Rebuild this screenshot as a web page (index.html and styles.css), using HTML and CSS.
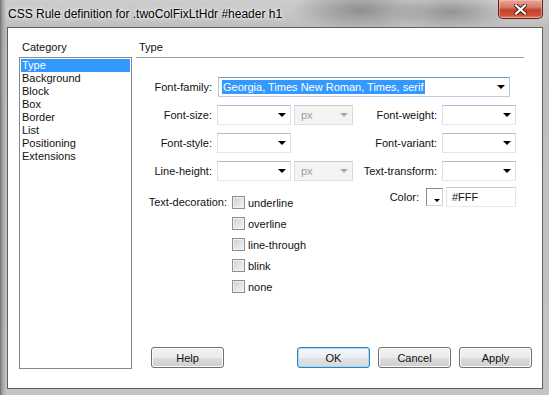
FILE: index.html
```html
<!DOCTYPE html>
<html lang="en">
<head>
    <meta charset="UTF-8">
    <meta name="viewport" content="width=device-width, initial-scale=1.0">
    <title>CSS Rule definition</title>
    <link rel="stylesheet" href="styles.css">
</head>
<body>
    <div class="window">
        <div class="titlebar">
            <span class="title">CSS Rule definition for .twoColFixLtHdr #header h1</span>
            <button class="close" title="Close">
                <svg width="13" height="11" viewBox="0 0 13 11">
                    <path d="M2 1.5 L11 9.5 M11 1.5 L2 9.5" stroke="#4a2219" stroke-width="4.2" stroke-linecap="square"/>
                    <path d="M2 1.5 L11 9.5 M11 1.5 L2 9.5" stroke="#ffffff" stroke-width="2.2" stroke-linecap="square"/>
                </svg>
            </button>
        </div>
        <div class="client">
            <div class="sidebar">
                <div class="caption">Category</div>
                <ul class="category-list">
                    <li class="selected">Type</li>
                    <li>Background</li>
                    <li>Block</li>
                    <li>Box</li>
                    <li>Border</li>
                    <li>List</li>
                    <li>Positioning</li>
                    <li>Extensions</li>
                </ul>
            </div>
            <div class="main">
                <div class="panel-title">Type</div>

                <!-- Font rows -->
                <div class="form-grid">
                    <span class="lbl">Font-family:</span>
                    <div class="combo wide"><span class="hl">Georgia, Times New Roman, Times, serif</span><i class="arrow"></i></div>

                    <span class="lbl">Font-size:</span>
                    <div class="combo"><i class="arrow"></i></div>
                    <div class="combo unit disabled">px<i class="arrow"></i></div>
                    <span class="lbl">Font-weight:</span>
                    <div class="combo"><i class="arrow"></i></div>

                    <span class="lbl">Font-style:</span>
                    <div class="combo"><i class="arrow"></i></div>
                    <span></span>
                    <span class="lbl">Font-variant:</span>
                    <div class="combo"><i class="arrow"></i></div>

                    <span class="lbl">Line-height:</span>
                    <div class="combo"><i class="arrow"></i></div>
                    <div class="combo unit disabled">px<i class="arrow"></i></div>
                    <span class="lbl">Text-transform:</span>
                    <div class="combo"><i class="arrow"></i></div>
                </div>

                <!-- Decoration and colour -->
                <div class="extras">
                    <div class="decoration">
                        <span class="dec-label">Text-decoration:</span>
                        <ul class="checks">
                            <li><span class="checkbox"></span>underline</li>
                            <li><span class="checkbox"></span>overline</li>
                            <li><span class="checkbox"></span>line-through</li>
                            <li><span class="checkbox"></span>blink</li>
                            <li><span class="checkbox"></span>none</li>
                        </ul>
                    </div>
                    <div class="color-group">
                        <span class="color-label">Color:</span>
                        <span class="swatch"><i></i></span>
                        <span class="text-input">#FFF</span>
                    </div>
                </div>

                <div class="actions">
                    <button class="btn help">Help</button>
                    <button class="btn default ok">OK</button>
                    <button class="btn">Cancel</button>
                    <button class="btn">Apply</button>
                </div>
            </div>
        </div>
    </div>
</body>
</html>
```

FILE: styles.css
```css
html, body {
    margin: 0;
    padding: 0;
}
body {
    font-family: "Liberation Sans", Arial, sans-serif;
    font-size: 11px;
    color: #111;
}
.window {
    width: 549px;
    height: 395px;
    box-sizing: border-box;
    padding: 0 6px 6px 7px;
    display: flex;
    flex-direction: column;
    background:
        linear-gradient(to right, #6e6e6e 0, #9c9c9c 2px, rgba(200,200,200,0) 6px),
        radial-gradient(ellipse 70px 22px at 360px 10px, #8f8f8f, rgba(150,150,150,0)),
        radial-gradient(ellipse 60px 18px at 450px 12px, #939393, rgba(150,150,150,0)),
        linear-gradient(to bottom, #cdcdcd 0, #bdbdbd 30px, #c4c4c4 100%);
}
.titlebar {
    height: 27px;
    display: flex;
    align-items: flex-start;
    flex: none;
}
.title {
    font-size: 12px;
    line-height: 14px;
    margin: 7px 0 0 1px;
    color: #000;
    text-shadow: 0 0 6px #fff, 0 0 3px rgba(255,255,255,0.9);
}
.close {
    margin-left: auto;
    width: 45px;
    height: 19px;
    padding: 0;
    border: 1px solid #54251b;
    border-top: none;
    border-radius: 0 0 5px 5px;
    background: linear-gradient(to bottom, #e9a99b 0, #d57a68 40%, #c3402a 55%, #d24f36 85%, #e88a6f 100%);
    box-shadow: inset 0 0 0 1px rgba(255,200,190,0.5);
    display: flex;
    align-items: center;
    justify-content: center;
}
.client {
    flex: 1;
    display: flex;
    background: #fff;
    border: 1px solid #5e5e5e;
    padding-top: 13px;
}
.sidebar {
    width: 113px;
    margin: 0 4px 0 11px;
    flex: none;
}
.caption {
    line-height: 13px;
    padding-left: 3px;
    margin-bottom: 3px;
}
.category-list {
    list-style: none;
    margin: 0;
    height: 312px;
    box-sizing: border-box;
    border: 1px solid #828790;
    padding: 1px;
}
.category-list li {
    line-height: 13px;
    padding-left: 1px;
}
.category-list li.selected {
    background: #3399ff;
    color: #fff;
}
.main {
    flex: 1;
    display: flex;
    flex-direction: column;
}
.panel-title {
    line-height: 13px;
    padding: 0 0 3px 3px;
    margin-right: 18px;
    border-bottom: 1px solid #a0a0a0;
}
.form-grid {
    margin-top: 19px;
    display: grid;
    grid-template-columns: 81px 77px 59px 89px 74px;
    grid-auto-rows: 20px;
    row-gap: 8px;
}
.lbl {
    text-align: right;
    padding-right: 5px;
    line-height: 20px;
}
.combo {
    position: relative;
    width: 74px;
    height: 20px;
    box-sizing: border-box;
    border: 1px solid;
    border-color: #b9bcc2 #dcdfe4 #e3e6ea #dcdfe4;
    background: #fff;
}
.combo.wide {
    grid-column: 2 / span 4;
    width: 292px;
    margin-left: 1px;
    border-color: #6f96bd #aec8df #b9d0e4 #aec8df;
}
.combo.unit {
    width: 59px;
}
.combo.disabled {
    background: #f4f4f4;
    color: #9a9a9a;
    border-color: #c9cbcd #dadbdc #dfe0e1 #dadbdc;
    padding-left: 6px;
    line-height: 18px;
}
.hl {
    position: absolute;
    left: 3px;
    top: 2px;
    line-height: 14px;
    background: #3399ff;
    color: #fff;
    padding: 0 1px;
}
.arrow {
    position: absolute;
    right: 4px;
    top: 7px;
    width: 0;
    height: 0;
    border-left: 4px solid transparent;
    border-right: 4px solid transparent;
    border-top: 4px solid #000;
}
.disabled .arrow {
    border-top-color: #a8a8a8;
}
.extras {
    width: 380px;
    margin-top: 6px;
    display: flex;
    align-items: flex-start;
}
.decoration {
    display: flex;
    padding-top: 5px;
}
.dec-label {
    width: 96px;
    box-sizing: border-box;
    text-align: right;
    padding-right: 5px;
    line-height: 21px;
}
.checks {
    list-style: none;
    margin: 0;
    padding: 0;
}
.checks li {
    height: 21px;
    display: flex;
    align-items: center;
}
.checkbox {
    width: 13px;
    height: 13px;
    box-sizing: border-box;
    border: 1px solid #8e8f8f;
    background: linear-gradient(135deg, #cfcfcf, #f5f5f5);
    box-shadow: inset 0 0 0 1px #f0f0f0;
    margin-right: 3px;
}
.color-group {
    margin-left: auto;
    display: flex;
    align-items: center;
    height: 20px;
}
.color-label {
    margin-right: 7px;
}
.swatch {
    position: relative;
    width: 17px;
    height: 18px;
    box-sizing: border-box;
    border: 1px solid #8a8a8a;
    border-right-color: #d0d0d0;
    border-bottom-color: #d0d0d0;
    background: #fff;
    margin-right: 3px;
}
.swatch i {
    position: absolute;
    right: 2px;
    bottom: 3px;
    border-left: 3px solid transparent;
    border-right: 3px solid transparent;
    border-top: 3px solid #000;
}
.text-input {
    width: 70px;
    height: 20px;
    box-sizing: border-box;
    border: 1px solid;
    border-color: #c9cccf #e2e4e6 #e6e8ea #e2e4e6;
    line-height: 18px;
    padding-left: 5px;
}
.actions {
    margin-top: auto;
    margin-bottom: 20px;
    display: flex;
}
.btn {
    width: 73px;
    height: 21px;
    padding: 0;
    margin-left: 8px;
    font-family: "Liberation Sans", Arial, sans-serif;
    font-size: 11px;
    color: #111;
    border: 1px solid #707070;
    border-radius: 3px;
    background: linear-gradient(to bottom, #f2f2f2 0, #ebebeb 50%, #dddddd 50%, #cfcfcf 100%);
    box-shadow: inset 0 0 0 1px #fbfbfb;
}
.btn.help {
    margin-left: 15px;
}
.btn.ok {
    margin-left: 73px;
}
.btn.default {
    border-color: #3c7fb1;
    background: linear-gradient(to bottom, #f4f8fa 0, #eceff1 50%, #e0e4e7 50%, #d6dade 100%);
    box-shadow: inset 0 0 0 1px #9edcf7;
}
```
